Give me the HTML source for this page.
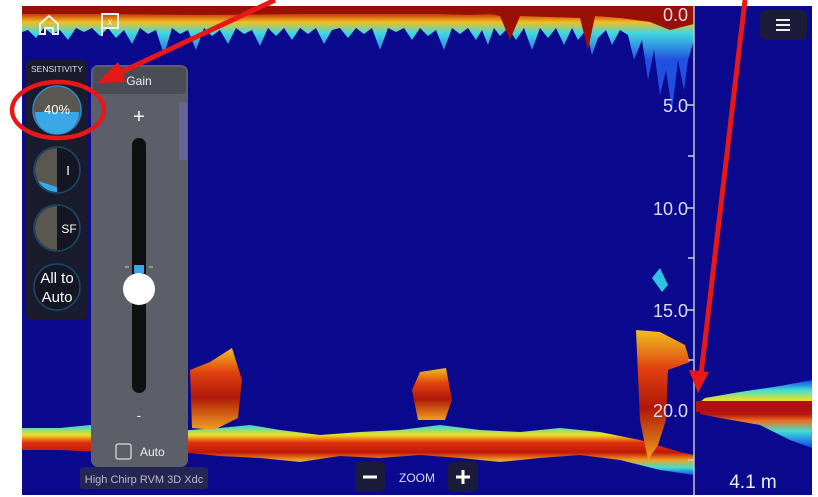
<!DOCTYPE html>
<html><head><meta charset="utf-8"><style>
html,body{margin:0;padding:0;background:#fff;width:818px;height:497px;overflow:hidden;font-family:"Liberation Sans",sans-serif}
svg{position:absolute;left:0;top:0}
</style></head><body>
<svg width="818" height="497" viewBox="0 0 818 497" xmlns="http://www.w3.org/2000/svg">
<defs>
<linearGradient id="bot" x1="0" y1="0" x2="0" y2="1">
<stop offset="0" stop-color="#2ad8e0"/><stop offset="0.2" stop-color="#f0e020"/><stop offset="0.35" stop-color="#e03010"/><stop offset="0.55" stop-color="#c01808"/><stop offset="0.7" stop-color="#f0a020"/><stop offset="0.85" stop-color="#40e0d0"/><stop offset="1" stop-color="#1050e0"/>
</linearGradient>
<linearGradient id="fish" x1="0" y1="0" x2="0" y2="1">
<stop offset="0" stop-color="#f0c020"/><stop offset="0.3" stop-color="#e04010"/><stop offset="0.6" stop-color="#b01808"/><stop offset="1" stop-color="#f0a020"/>
</linearGradient>
<linearGradient id="ascope" x1="0" y1="0" x2="0" y2="1">
<stop offset="0" stop-color="#1040f0"/><stop offset="0.15" stop-color="#40e0d0"/><stop offset="0.3" stop-color="#f0e020"/><stop offset="0.4" stop-color="#e03010"/><stop offset="0.5" stop-color="#b01010"/><stop offset="0.6" stop-color="#f07020"/><stop offset="0.75" stop-color="#40e0d0"/><stop offset="1" stop-color="#1040f0"/>
</linearGradient>
<linearGradient id="top" gradientUnits="userSpaceOnUse" x1="0" y1="6" x2="0" y2="60">
<stop offset="0" stop-color="#9a1006"/><stop offset="0.12" stop-color="#c02008"/><stop offset="0.3" stop-color="#f0c020"/><stop offset="0.5" stop-color="#40d8e0"/><stop offset="1" stop-color="#2050e0"/>
</linearGradient>
</defs>
<rect x="22" y="6" width="790" height="489" fill="#0b0a8f"/>
<!-- top clutter -->
<path d="M22 6H694V40L688 60 684 90 678 60 672 110 666 70 660 95 654 50 648 80 642 40 634 60 628 35 620 30 612 45 606 30 598 38 592 55 586 30 578 40 572 28 564 45 556 28 548 38 540 28 532 50 524 28 516 40 508 28 500 36 494 28 488 45 482 30 476 40 468 28 460 34 452 28 444 50 436 30 428 36 420 28 412 40 404 28 396 32 388 28 380 50 372 28 364 34 356 28 348 38 340 28 332 30 324 44 316 28 308 34 300 28 292 40 284 28 276 36 268 28 260 46 252 30 244 34 236 28 228 44 220 30 212 36 204 28 196 50 188 30 180 34 172 28 164 55 156 30 148 34 140 28 132 44 124 30 116 38 108 28 100 36 92 28 84 32 76 28 68 40 60 30 52 34 44 28 36 38 28 30 22 32Z" fill="url(#top)"/>
<path d="M22 6H694V24L670 30 650 22 620 18 595 16 588 50 580 18 520 16 510 40 500 16 490 14 470 15 440 14 300 14 200 15 100 14 22 14Z" fill="#9a1006"/>
<!-- bottom -->
<path d="M22 428L60 428 90 425 120 430 160 432 190 430 220 428 250 425 280 430 320 435 360 432 400 430 440 425 480 430 520 432 560 428 600 432 640 440 680 452 694 455V475L660 470 620 460 580 455 540 458 500 462 460 458 420 455 380 458 340 456 300 462 260 458 220 456 180 452 140 454 100 452 60 450 22 450Z" fill="url(#bot)"/>
<!-- fish -->
<path d="M190 370L210 362 232 348 242 380 238 418 214 430 192 428Z" fill="url(#fish)"/>
<path d="M412 390L420 372 446 368 452 400 445 420 418 420Z" fill="url(#fish)"/>
<path d="M636 330L660 332 685 345 690 362 668 370 666 420 658 445 648 460 640 420Z" fill="url(#fish)"/>
<path d="M652 278L660 268 668 285 662 292Z" fill="#30c0e0"/>
<!-- right panel -->
<line x1="694" y1="6" x2="694" y2="495" stroke="#c0c4d0" stroke-width="1.5"/>
<path d="M812 380L780 386 740 392 705 398 700 402 700 414 720 418 760 425 790 440 812 448Z" fill="url(#ascope)"/>
<rect x="696" y="401" width="116" height="11" fill="#b01010"/>
<g fill="#dde" font-size="18" text-anchor="end">
<text x="688" y="21">0.0</text><text x="688" y="112">5.0</text><text x="688" y="215">10.0</text><text x="688" y="317">15.0</text><text x="688" y="417">20.0</text>
</g>
<g stroke="#ccd" stroke-width="1.5"><line x1="686" y1="105" x2="694" y2="105"/><line x1="686" y1="208" x2="694" y2="208"/><line x1="686" y1="310" x2="694" y2="310"/><line x1="688" y1="156" x2="694" y2="156"/><line x1="688" y1="258" x2="694" y2="258"/><line x1="688" y1="360" x2="694" y2="360"/><line x1="688" y1="460" x2="694" y2="460"/></g>
<text x="753" y="488" fill="#eee" font-size="19" text-anchor="middle">4.1 m</text>
<rect x="760" y="10" width="47" height="30" rx="6" fill="#1a1c3a"/>
<g stroke="#eee" stroke-width="2"><line x1="776" y1="20" x2="790" y2="20"/><line x1="776" y1="25" x2="790" y2="25"/><line x1="776" y1="30" x2="790" y2="30"/></g>
<!-- top icons -->
<path d="M40 34V24L49 16 58 24V34H53V28H45V34Z" fill="none" stroke="#eee" stroke-width="2"/>
<path d="M102 36V14H118V28H102" fill="none" stroke="#eee" stroke-width="2"/>
<text x="110" y="25" fill="#eee" font-size="10" text-anchor="middle">x</text>
<!-- sensitivity panel -->
<rect x="26" y="60" width="62" height="260" rx="5" fill="#1a1c2e"/>
<text x="57" y="72" fill="#dde" font-size="8.5" text-anchor="middle">SENSITIVITY</text>
<circle cx="57" cy="110" r="24" fill="#5a5650" stroke="#2a8acb" stroke-width="1.5"/>
<path d="M35 112H79A22 22 0 0 1 35 112Z" fill="#3aa8e8"/>
<text x="57" y="114" fill="#fff" font-size="13" text-anchor="middle">40%</text>
<circle cx="57" cy="170" r="23" fill="#141624" stroke="#1a4a6a" stroke-width="1.5"/>
<path d="M57 148A22 22 0 0 0 57 192Z" fill="#5a5650"/><path d="M38 181A22 22 0 0 0 57 192V187Z" fill="#3aa8e8"/>
<text x="68" y="175" fill="#fff" font-size="13" text-anchor="middle">I</text>
<circle cx="57" cy="228" r="23" fill="#141624" stroke="#1a4a6a" stroke-width="1.5"/>
<path d="M57 206A22 22 0 0 0 57 250Z" fill="#5a5650"/>
<text x="69" y="233" fill="#fff" font-size="12" text-anchor="middle">SF</text>
<circle cx="57" cy="287" r="23" fill="#141624" stroke="#1a4a6a" stroke-width="1.5"/>
<text x="57" y="283" fill="#fff" font-size="15" text-anchor="middle">All to</text>
<text x="57" y="302" fill="#fff" font-size="15" text-anchor="middle">Auto</text>
<!-- gain panel -->
<rect x="91" y="65" width="97" height="402" rx="7" fill="#5c5e68"/>
<rect x="93" y="67" width="93" height="27" rx="4" fill="#4a4c56"/>
<rect x="179" y="102" width="8" height="58" fill="#6a6ab8" opacity="0.6"/>
<text x="139" y="85" fill="#eee" font-size="12" text-anchor="middle">Gain</text>
<text x="139" y="123" fill="#fff" font-size="20" text-anchor="middle">+</text>
<rect x="132" y="138" width="14" height="255" rx="7" fill="#0e1012"/>
<rect x="134" y="265" width="10" height="8" fill="#3aa8e8"/>
<line x1="125" y1="267" x2="129" y2="267" stroke="#ccc"/><line x1="149" y1="267" x2="153" y2="267" stroke="#ccc"/>
<circle cx="139" cy="289" r="16" fill="#fff"/>
<text x="139" y="420" fill="#eee" font-size="14" text-anchor="middle">-</text>
<rect x="116" y="444" width="15" height="15" rx="2" fill="none" stroke="#ddd" stroke-width="1.3"/>
<text x="140" y="456" fill="#eee" font-size="12">Auto</text>
<rect x="80" y="467" width="128" height="22" rx="3" fill="#2a2c48" opacity="0.85"/>
<text x="144" y="483" fill="#bbc" font-size="11" text-anchor="middle">High Chirp RVM 3D Xdc</text>
<!-- zoom -->
<rect x="355" y="462" width="30" height="30" rx="5" fill="#1a1c3a"/>
<line x1="363" y1="477" x2="377" y2="477" stroke="#fff" stroke-width="3"/>
<text x="417" y="482" fill="#dde" font-size="12" text-anchor="middle">ZOOM</text>
<rect x="448" y="462" width="30" height="30" rx="5" fill="#1a1c3a"/>
<path d="M456 477H470M463 470V484" stroke="#fff" stroke-width="3"/>
<!-- annotations -->
<ellipse cx="58" cy="110" rx="46" ry="28" fill="none" stroke="#e81818" stroke-width="4.5"/>
<line x1="275" y1="0" x2="115" y2="75" stroke="#e81818" stroke-width="5"/>
<path d="M97 83L118 62 126 82Z" fill="#e81818"/>
<line x1="745" y1="0" x2="701" y2="375" stroke="#e81818" stroke-width="5"/>
<path d="M698 393L689 370 709 372Z" fill="#e81818"/>
</svg>
</body></html>
